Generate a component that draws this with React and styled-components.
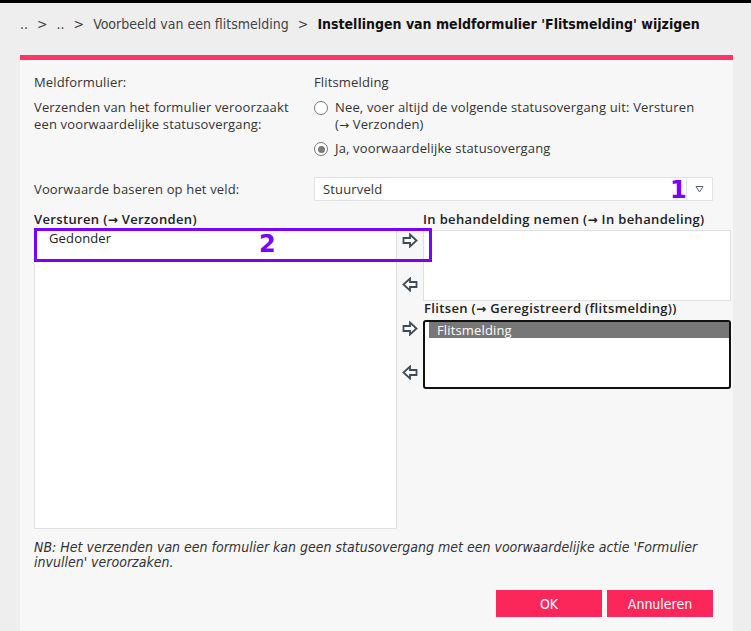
import React from 'react';
import styled, { createGlobalStyle } from 'styled-components';

const GlobalStyle = createGlobalStyle`
  html, body {
    margin: 0;
    padding: 0;
    background: #eeeeee;
    height: 100%;
  }
  #root {
    min-height: 100%;
  }
`;

const Page = styled.div`
  min-height: 631px;
  border-top: 3px solid #000;
  box-sizing: border-box;
  display: flex;
  flex-direction: column;
  font-family: "Open Sans", "Noto Sans", sans-serif;
  font-size: 13px;
  letter-spacing: 0.15px;
  color: #333;
`;

const Crumbs = styled.div`
  height: 52px;
  padding: 0 0 11px 20px;
  display: flex;
  align-items: center;
  font-family: "DejaVu Sans Condensed", "DejaVu Sans", sans-serif;
  font-size: 14px;
  letter-spacing: 0;
  color: #444;
  box-sizing: border-box;
`;

const Crumb = styled.span`
  color: ${p => (p.current ? '#111' : '#444')};
  font-weight: ${p => (p.current ? 700 : 400)};
`;

const Sep = styled.span`
  margin: 0 9px;
  color: #444;
`;

const Panel = styled.div`
  flex: 1;
  margin: 0 18px 0 20px;
  background: #f7f7f7;
  border-top: 5px solid #fe3568;
  padding: 14px 20px 14px 14px;
  display: flex;
  flex-direction: column;
`;

const FieldRow = styled.div`
  display: grid;
  grid-template-columns: 280px 1fr;
  line-height: 17px;
  margin-bottom: ${p => p.gap || 0}px;
  align-items: ${p => (p.center ? 'center' : 'start')};
`;

const Label = styled.div`
  color: #333;
`;

const Value = styled.div`
  color: #333;
`;

const RArrow = styled.span`
  font-family: "DejaVu Sans", sans-serif;
  font-size: 12px;
  line-height: 0;
`;

const RadioList = styled.div`
  display: flex;
  flex-direction: column;
  gap: 7px;
`;

const RadioOption = styled.label`
  display: flex;
  align-items: flex-start;
  gap: 7px;
`;

const RadioDot = styled.span`
  flex: none;
  width: 12px;
  height: 12px;
  margin-top: 2px;
  border: 1px solid #777;
  border-radius: 50%;
  background: #fff;
  display: flex;
  align-items: center;
  justify-content: center;

  &::after {
    content: '';
    width: 7px;
    height: 7px;
    border-radius: 50%;
    background: ${p => (p.checked ? '#7a7a7a' : 'transparent')};
  }
`;

const Select = styled.div`
  position: relative;
  height: 24px;
  background: #fff;
  border: 1px solid #e2e2e2;
  box-sizing: border-box;
  display: flex;
  align-items: center;
`;

const SelectText = styled.span`
  flex: 1;
  padding-left: 8px;
`;

const SelectArrow = styled.span`
  width: 25px;
  height: 100%;
  border-left: 1px solid #e2e2e2;
  display: flex;
  align-items: center;
  justify-content: center;
`;

const Marker = styled.span`
  position: absolute;
  font-family: "DejaVu Sans", sans-serif;
  font-weight: 700;
  font-size: 24px;
  line-height: 24px;
  letter-spacing: 0;
  color: #7a00ff;
  left: ${p => p.x}px;
  top: ${p => p.y}px;
`;

const Transfer = styled.div`
  position: relative;
  display: grid;
  grid-template-columns: 363px 26px 308px;
  margin-top: 11px;
`;

const Column = styled.div`
  display: flex;
  flex-direction: column;
`;

const ListLabel = styled.div`
  font-weight: 600;
  color: #222;
  line-height: 15px;
  letter-spacing: 0.35px;
  margin-left: ${p => p.indent || 0}px;
`;

const ListBox = styled.div`
  background: #fff;
  box-sizing: border-box;
  height: ${p => p.h}px;
  margin-top: ${p => p.top || 0}px;
  border: ${p => (p.active ? '2px solid #111' : '1px solid #e0e0e0')};
  border-radius: ${p => (p.active ? '3px' : '0')};
  padding: ${p => (p.active ? '0 0 0 4px' : '1px 0 0 0')};
`;

const ListItem = styled.div`
  line-height: 16px;
  padding-left: ${p => (p.selected ? 8 : 14)}px;
  background: ${p => (p.selected ? '#777' : 'transparent')};
  color: ${p => (p.selected ? '#fff' : '#222')};
`;

const ArrowStack = styled.div`
  display: flex;
  flex-direction: column;
  align-items: center;
  padding-top: 21px;
  gap: 29px;
`;

const ArrowBtn = styled.span`
  height: 15px;
  display: flex;
  align-items: center;
  justify-content: center;
`;

const Highlight = styled.div`
  position: absolute;
  left: 0;
  top: 16px;
  width: 398px;
  height: 34px;
  border: 3px solid #7a00ff;
  box-sizing: border-box;
`;

const Note = styled.p`
  margin: 11px 0 0;
  font-family: "DejaVu Sans Condensed", "DejaVu Sans", sans-serif;
  font-style: italic;
  font-size: 14px;
  line-height: 15px;
  letter-spacing: 0;
  color: #333;
`;

const Actions = styled.div`
  display: flex;
  justify-content: flex-end;
  gap: 5px;
  margin-top: 20px;
`;

const Button = styled.button`
  width: 106px;
  height: 27px;
  border: none;
  background: #fb2659;
  color: #fff;
  font-family: "DejaVu Sans Condensed", "DejaVu Sans", sans-serif;
  font-size: 14px;
  cursor: pointer;
`;

function Arrow({ left }) {
  return (
    <svg width="16" height="15" viewBox="0 0 16 15" style={{ transform: left ? 'scaleX(-1)' : 'none' }}>
      <path
        d="M1.5 5 H8 V1.5 L14.5 7.5 L8 13.5 V10 H1.5 Z"
        fill="#fff"
        stroke="#3d4a58"
        strokeWidth="1.8"
        strokeLinejoin="miter"
      />
    </svg>
  );
}

function Caret() {
  return (
    <svg width="9" height="8" viewBox="0 0 9 8">
      <path d="M1 1.5 H8 L4.5 7 Z" fill="none" stroke="#56657a" strokeWidth="1" />
    </svg>
  );
}

export default function App() {
  return (
    <Page>
      <GlobalStyle />
      <Crumbs>
        <Crumb>..</Crumb>
        <Sep>&gt;</Sep>
        <Crumb>..</Crumb>
        <Sep>&gt;</Sep>
        <Crumb>Voorbeeld van een flitsmelding</Crumb>
        <Sep>&gt;</Sep>
        <Crumb current>Instellingen van meldformulier 'Flitsmelding' wijzigen</Crumb>
      </Crumbs>

      <Panel>
        <FieldRow gap={8}>
          <Label>Meldformulier:</Label>
          <Value>Flitsmelding</Value>
        </FieldRow>

        <FieldRow gap={20}>
          <Label>
            Verzenden van het formulier veroorzaakt
            <br />
            een voorwaardelijke statusovergang:
          </Label>
          <RadioList>
            <RadioOption>
              <RadioDot />
              <span>
                Nee, voer altijd de volgende statusovergang uit: Versturen
                <br />
                (<RArrow>→</RArrow> Verzonden)
              </span>
            </RadioOption>
            <RadioOption>
              <RadioDot checked />
              <span>Ja, voorwaardelijke statusovergang</span>
            </RadioOption>
          </RadioList>
        </FieldRow>

        <FieldRow center>
          <Label>Voorwaarde baseren op het veld:</Label>
          <Select>
            <SelectText>Stuurveld</SelectText>
            <Marker x={355} y={0}>1</Marker>
            <SelectArrow>
              <Caret />
            </SelectArrow>
          </Select>
        </FieldRow>

        <Transfer>
          <Column>
            <ListLabel>Versturen (<RArrow>→</RArrow> Verzonden)</ListLabel>
            <ListBox h={301} top={1}>
              <ListItem>Gedonder</ListItem>
            </ListBox>
          </Column>

          <ArrowStack>
            <ArrowBtn><Arrow /></ArrowBtn>
            <ArrowBtn><Arrow left /></ArrowBtn>
            <ArrowBtn><Arrow /></ArrowBtn>
            <ArrowBtn><Arrow left /></ArrowBtn>
          </ArrowStack>

          <Column>
            <ListLabel>In behandelding nemen (<RArrow>→</RArrow> In behandeling)</ListLabel>
            <ListBox h={71} top={3} />
            <ListLabel indent={1}>Flitsen (<RArrow>→</RArrow> Geregistreerd (flitsmelding))</ListLabel>
            <ListBox h={69} top={4} active>
              <ListItem selected>Flitsmelding</ListItem>
            </ListBox>
          </Column>

          <Highlight />
          <Marker x={225} y={20}>2</Marker>
        </Transfer>

        <Note>
          NB: Het verzenden van een formulier kan geen statusovergang met een voorwaardelijke actie 'Formulier
          invullen' veroorzaken.
        </Note>

        <Actions>
          <Button>OK</Button>
          <Button>Annuleren</Button>
        </Actions>
      </Panel>
    </Page>
  );
}
